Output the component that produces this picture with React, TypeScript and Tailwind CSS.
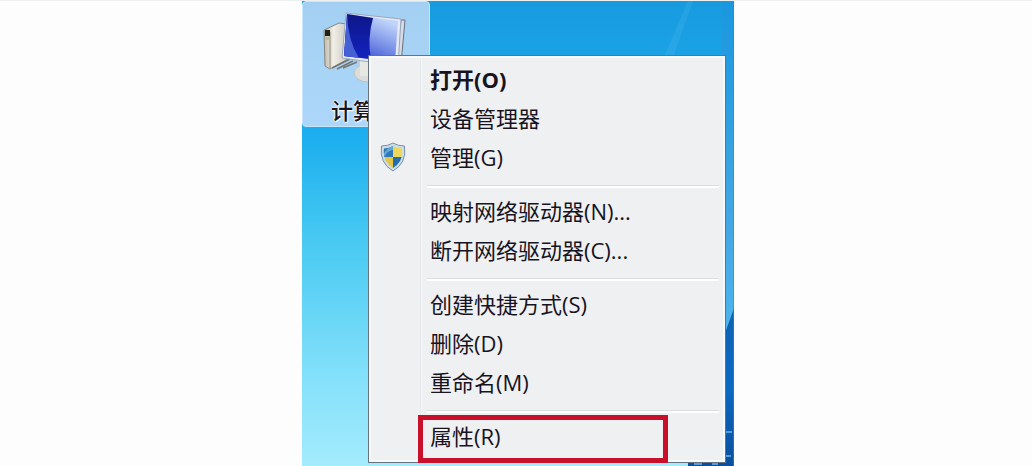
import { Fragment } from 'react'

type Item = { label: string; bold?: boolean; shield?: boolean; marked?: boolean }

const GROUPS: Item[][] = [
  [
    { label: '打开(O)', bold: true },
    { label: '设备管理器' },
    { label: '管理(G)', shield: true },
  ],
  [{ label: '映射网络驱动器(N)...' }, { label: '断开网络驱动器(C)...' }],
  [{ label: '创建快捷方式(S)' }, { label: '删除(D)' }, { label: '重命名(M)' }],
  [{ label: '属性(R)', marked: true }],
]

function Wallpaper() {
  return (
    <svg className="absolute inset-0 h-full w-full" viewBox="0 0 432 466" preserveAspectRatio="none" aria-hidden="true">
      <defs>
        <linearGradient id="sky" x1="0" y1="0" x2="0" y2="1">
          <stop offset="0" stopColor="#189adf" />
          <stop offset="0.3" stopColor="#1dafef" />
          <stop offset="0.5" stopColor="#45c8f2" />
          <stop offset="0.8" stopColor="#82e0fa" />
          <stop offset="1" stopColor="#a4ebfd" />
        </linearGradient>
        <linearGradient id="edge" x1="0" y1="0" x2="0" y2="1">
          <stop offset="0" stopColor="#1a97df" />
          <stop offset="0.5" stopColor="#45a8e4" />
          <stop offset="0.7" stopColor="#4cb4ec" />
        </linearGradient>
        <linearGradient id="hill" x1="0" y1="0" x2="0" y2="1">
          <stop offset="0" stopColor="#0f62b0" />
          <stop offset="0.5" stopColor="#0b69c2" />
          <stop offset="1" stopColor="#0b4f9c" />
        </linearGradient>
      </defs>
      <rect width="432" height="466" fill="url(#sky)" />
      <rect x="420" width="12" height="466" fill="url(#edge)" />
      <path d="M386 0h5l-20 56h-9z" fill="#5bbcf0" opacity="0.2" />
      <path d="M432 308l-8 22v132h-38v4h46z" fill="url(#hill)" />
      <path d="M424 432h6M424 456h5M392 464h8M410 464h6" stroke="#6fb7e8" strokeWidth="1.5" />
      <path d="M431.5 0v466" stroke="#3b86b5" opacity="0.6" />
    </svg>
  )
}

function ComputerIcon() {
  return (
    <svg width="84" height="74" viewBox="0 0 84 74" aria-hidden="true">
      <defs>
        <linearGradient id="screen" x1="0" y1="1" x2="0.5" y2="0">
          <stop offset="0" stopColor="#1a2cc4" />
          <stop offset="0.5" stopColor="#6f86e4" />
          <stop offset="1" stopColor="#bfd4fa" />
        </linearGradient>
        <linearGradient id="glare" x1="0" y1="0" x2="0" y2="1">
          <stop offset="0" stopColor="#0d1788" />
          <stop offset="1" stopColor="#1322c0" />
        </linearGradient>
        <linearGradient id="tower" x1="0" y1="0" x2="1" y2="0">
          <stop offset="0" stopColor="#bdb9ac" />
          <stop offset="0.4" stopColor="#f1eee6" />
          <stop offset="1" stopColor="#c9c7c2" />
        </linearGradient>
      </defs>
      <path d="M2 20L17 13 26 14v35L8 59 3 56z" fill="url(#tower)" stroke="#89877f" />
      <path d="M8 22v36" stroke="#8d8a80" />
      <path d="M3 20h5v6H3z" fill="#1e2415" />
      <path d="M4 27h4v3H4z" fill="#b9bd8c" />
      <path d="M10 58l18-9M15 59l16-8M21 58l14-6" stroke="#77746d" strokeWidth="1.5" />
      <ellipse cx="46" cy="63" rx="14" ry="9" fill="#dcdcda" stroke="#bcc2c6" />
      <path d="M38 50h14v16H38z" fill="#e7e7e4" />
      <path d="M79 10h4l-4 44h-5z" fill="#d6dce6" stroke="#6a7084" />
      <path d="M24 3L79 9 76 56 20 48z" fill="#e4e9f3" stroke="#9aa7bd" />
      <path d="M25 4L76 11 73 52 22 46z" fill="url(#screen)" />
      <path d="M25 4L51 8Q45 29 49 49L22 46z" fill="url(#glare)" />
      <path d="M25 4Q26 31 37 48L22 46z" fill="#4560d4" />
    </svg>
  )
}

function Shield() {
  return (
    <svg className="h-8 w-7" viewBox="0 0 28 32" aria-hidden="true">
      <defs>
        <clipPath id="shieldInner">
          <path d="M14 5Q18 7 23 7.500Q25 20 14 27Q3 20 5 7.500Q10 7 14 5z" />
        </clipPath>
      </defs>
      <path d="M14 2Q19 5 25.500 5Q28 22 14 30Q0 22 2.500 5Q9 5 14 2z" fill="#cbdde9" stroke="#7790a6" />
      <g clipPath="url(#shieldInner)">
        <path d="M2 2h12v14H2z" fill="#2e79b5" />
        <path d="M14 2h12v14H14z" fill="#edd658" />
        <path d="M2 16h12v14H2z" fill="#e3c548" />
        <path d="M14 16h12v14H14z" fill="#236eaa" />
        <path d="M4 14Q8 6 14 5v4Q8 10 6 15z" fill="#8bc3e4" opacity="0.6" />
      </g>
    </svg>
  )
}

function Separator() {
  return (
    <li role="separator" className="ml-14 mr-1 h-[15px] pt-[9px]">
      <div className="h-[3px] border-t border-[#dcdde0] bg-white" />
    </li>
  )
}

function MenuItem({ item }: { item: Item }) {
  return (
    <li role="none" className="relative">
      <button
        type="button"
        role="menuitem"
        className={`flex h-[39px] w-full items-center text-left ${item.bold ? 'font-bold' : ''}`}
      >
        <span className="flex w-[59px] shrink-0 items-center pl-2">{item.shield && <Shield />}</span>
        {item.label}
      </button>
      {item.marked && (
        <span className="pointer-events-none absolute -bottom-2 left-[47px] h-12 w-[250px] border-[5px] border-[#c9102a]" />
      )}
    </li>
  )
}

export default function App() {
  return (
    <div className="flex min-h-screen justify-center border-t border-[#eeeff1] bg-[#fdfdfe] pl-1 font-['Open_Sans','Noto_Sans_CJK_SC',sans-serif] text-[22px] leading-6 text-[#17141f]">
      <main className="relative w-[432px] overflow-hidden">
        <Wallpaper />
        <button
          type="button"
          className="relative flex h-[126px] w-32 flex-col items-center gap-3.5 rounded-sm border border-[#c8e5fa] bg-linear-to-b from-[#a3d0f2] to-[#acd7fa] pr-1 pt-2"
        >
          <ComputerIcon />
          <span className="font-medium [text-shadow:0_0_2px_#fff,0_0_3px_#fff,1px_1px_1px_#fff]">计算机</span>
        </button>

        <div className="absolute left-[66px] right-2 top-[54px] border border-[#66737e] bg-[#eff0f2]">
          <span className="absolute inset-y-0.5 left-[51px] w-0.5 border-l border-[#e7e8eb] bg-[#f6f7f8]" />
          <ul role="menu" className="relative border-2 border-[#f7f8f9] pb-[5px] pt-px">
            {GROUPS.map((group, i) => (
              <Fragment key={group[0].label}>
                {i > 0 && <Separator />}
                {group.map((item) => (
                  <MenuItem key={item.label} item={item} />
                ))}
              </Fragment>
            ))}
          </ul>
        </div>
      </main>
    </div>
  )
}
